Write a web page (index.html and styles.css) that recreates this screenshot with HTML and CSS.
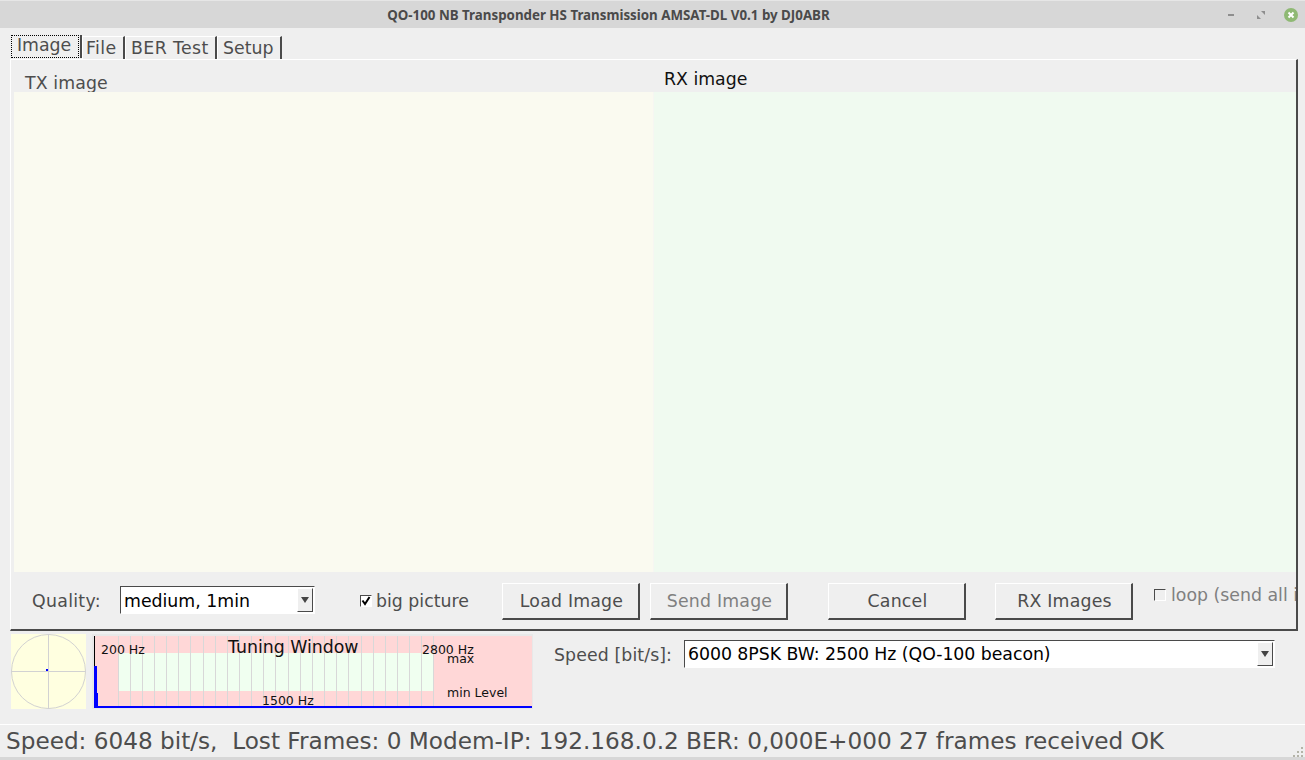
FILE: index.html
```html
<!DOCTYPE html>
<html lang="en">
<head>
<meta charset="utf-8">
<title>QO-100 NB Transponder HS Transmission</title>
<link rel="stylesheet" href="styles.css">
</head>
<body>
<div class="window">
  <header class="titlebar">
    <div class="title">QO-100 NB Transponder HS Transmission AMSAT-DL V0.1 by DJ0ABR</div>
    <div class="wm-buttons">
      <svg class="wm-icon" viewBox="0 0 14 14"><rect x="4" y="6" width="6" height="2" fill="#8e8e8e"/></svg>
      <svg class="wm-icon" viewBox="0 0 14 14"><path d="M7 3h4v4zM3 7v4h4z" fill="#8e8e8e"/></svg>
      <svg class="wm-close" viewBox="0 0 14 14"><circle cx="7" cy="7" r="7" fill="#8fb974"/><path d="M4.5 4.5l5 5M9.5 4.5l-5 5" stroke="#fff" stroke-width="2"/></svg>
    </div>
  </header>

  <nav class="tabs">
    <div class="tab tab-active"><span class="tab-focus">Image</span></div>
    <div class="tab tab-file">File</div>
    <div class="tab tab-ber">BER Test</div>
    <div class="tab tab-setup">Setup</div>
  </nav>

  <main class="panel">
    <div class="viewers">
      <section class="viewer">
        <div class="viewer-label tx-label">TX image</div>
        <div class="viewer-area tx-area"></div>
      </section>
      <section class="viewer">
        <div class="viewer-label rx-label">RX image</div>
        <div class="viewer-area rx-area"></div>
      </section>
    </div>
    <div class="controls">
      <span class="label quality-label">Quality:</span>
      <div class="combo quality-combo">
        <span class="combo-text">medium, 1min</span>
        <span class="combo-arrow"><svg viewBox="0 0 8 6" class="arrow"><path d="M0 0h8L4 6z" fill="#444"/></svg></span>
      </div>
      <label class="check big-check">
        <span class="checkbox"><svg viewBox="0 0 10 10"><path d="M1.5 4.5L4 8l4.5-7" fill="none" stroke="#000" stroke-width="2"/></svg></span>
        <span class="label">big picture</span>
      </label>
      <button class="btn load-btn">Load Image</button>
      <button class="btn send-btn" disabled>Send Image</button>
      <button class="btn cancel-btn">Cancel</button>
      <button class="btn rx-btn">RX Images</button>
      <label class="check loop-check">
        <span class="checkbox checkbox-off"></span>
        <span class="label-disabled">loop (send all images)</span>
      </label>
    </div>
  </main>

  <section class="lower">
    <svg class="scope" viewBox="0 0 75 75" width="75" height="75">
      <rect width="75" height="75" fill="#ffffe0"/>
      <circle cx="37.5" cy="37.5" r="37" fill="none" stroke="#d2d2d2"/>
      <path d="M37.5 0v75M0 37.5h75" stroke="#d2d2d2"/>
      <rect x="35" y="35" width="2" height="2" fill="#0000ff"/>
    </svg>
    <svg class="tuning" viewBox="0 0 441 75" width="441" height="75">
      <rect width="441" height="75" fill="#e8e8e8"/>
      <rect x="2" y="2" width="438" height="70" fill="#ffd7d7"/>
      <rect x="26" y="19" width="315" height="38" fill="#f0fff0"/>
      <path class="grid-lines" d="M26.5 2v70M38.5 2v70M50.5 2v70M62.5 2v70M74.5 2v70M86.5 2v70M98.5 2v70M111.5 2v70M123.5 2v70M135.5 2v70M147.5 2v70M159.5 2v70M171.5 2v70M183.5 2v70M196.5 2v70M208.5 2v70M220.5 2v70M232.5 2v70M244.5 2v70M256.5 2v70M269.5 2v70M281.5 2v70M293.5 2v70M305.5 2v70M317.5 2v70M329.5 2v70M341.5 2v70"/>
      <rect x="2" y="2" width="1" height="30" fill="#000"/>
      <rect x="2" y="32" width="3" height="27" fill="#0000ff"/>
      <rect x="2" y="59" width="4" height="13" fill="#0000ff"/>
      <rect x="2" y="72" width="438" height="2" fill="#0000ff"/>
      <text x="9" y="20" class="t-small">200 Hz</text>
      <text x="136" y="19" class="t-title">Tuning Window</text>
      <text x="330" y="20" class="t-small">2800 Hz</text>
      <text x="355" y="29" class="t-small">max</text>
      <text x="355" y="63" class="t-small">min Level</text>
      <text x="170" y="71" class="t-small">1500 Hz</text>
    </svg>
    <span class="label speed-label">Speed [bit/s]:</span>
    <div class="combo speed-combo">
      <span class="combo-text">6000 8PSK BW: 2500 Hz (QO-100 beacon)</span>
      <span class="combo-arrow"><svg viewBox="0 0 8 6" class="arrow"><path d="M0 0h8L4 6z" fill="#444"/></svg></span>
    </div>
  </section>

  <footer class="statusbar">
    <span class="status-text">Speed: 6048 bit/s,&nbsp; Lost Frames: 0 Modem-IP: 192.168.0.2 BER: 0,000E+000 27 frames received OK</span>
    <svg class="grip" viewBox="0 0 10 10" width="10" height="10"><path d="M8 0h2v2H8zM4 4h2v2H4zM8 4h2v2H8zM0 8h2v2H0zM4 8h2v2H4zM8 8h2v2H8z" fill="#b4b4a8"/></svg>
  </footer>
  <div class="bottom-edge"></div>
</div>
</body>
</html>
```

FILE: styles.css
```css
* { box-sizing: border-box; }
html, body { margin: 0; padding: 0; }
body {
  width: 1305px;
  height: 760px;
  overflow: hidden;
  background: #efefef;
  font-family: "DejaVu Sans", sans-serif;
  font-size: 17.33px;
  color: #4d4d4d;
}
.window { width: 1305px; height: 760px; display: flex; flex-direction: column; }

.titlebar {
  height: 28px;
  flex: none;
  background: #d7d7d7;
  border-top: 1px solid #e6e6e6;
  display: flex;
  align-items: center;
  padding-right: 7px;
}
.title {
  flex: 1;
  text-align: center;
  font-family: "Noto Sans", sans-serif;
  font-weight: 700;
  font-size: 13.33px;
  color: #4a4a4a;
  padding-left: 7px;
  white-space: nowrap;
}
.wm-buttons { display: flex; align-items: center; gap: 16px; width: 88px; justify-content: flex-end; }
.wm-icon { width: 14px; height: 14px; }
.wm-close { width: 14px; height: 14px; }

.tabs { height: 31px; flex: none; display: flex; align-items: flex-end; padding-left: 11px; }
.tab {
  height: 23px;
  line-height: 23px;
  flex: none;
  border-right: 2px solid #4a4a4a;
  border-left: 1px solid #fff;
  border-top: 1px solid #fff;
  white-space: nowrap;
}
.tab-active {
  width: 71px;
  height: 23px;
  padding: 0 1px 0 0;
  border-top: 0;
  border-left: 0;
  margin-bottom: 1px;
}
.tab-focus {
  display: block;
  padding: 0 0 0 6px;
  height: 23px;
  line-height: 21px;
  outline: 1px dotted #000;
  outline-offset: -1px;
}
.tab-file { width: 43px; padding-left: 3px; letter-spacing: 0.4px; }
.tab-ber { width: 92px; padding-left: 5px; letter-spacing: 0.4px; }
.tab-setup { width: 65px; padding-left: 5px; }

.panel {
  height: 572px;
  flex: none;
  margin: 0 7px 0 10px;
  border-top: 1px solid #fff;
  border-left: 1px solid #fff;
  border-right: 2px solid #4a4a4a;
  border-bottom: 2px solid #4a4a4a;
  display: flex;
  flex-direction: column;
  overflow: hidden;
}
.viewers { height: 512px; flex: none; display: grid; grid-template-columns: 640px 642px; padding-left: 3px; gap: 0; }
.viewer { display: flex; flex-direction: column; min-width: 0; }
.viewer-label { height: 32px; flex: none; white-space: nowrap; }
.tx-label { padding: 13px 0 0 11px; line-height: 20px; letter-spacing: 0.1px; }
.rx-label { padding: 9px 0 0 10px; line-height: 20px; color: #111; }
.viewer-area { height: 480px; }
.tx-area { background: #fafaf0; border-right: 1px solid #f6f6f2; }
.rx-area { background: #f0faf0; }

.controls { flex: 1; display: flex; align-items: flex-start; min-width: 0; white-space: nowrap; overflow: hidden; }
.label { color: #4d4d4d; }
.quality-label { margin: 19px 0 0 21px; line-height: 20px; width: 88px; flex: none; letter-spacing: 0.3px; }
.combo {
  display: flex;
  background: #fff;
  border: 1px solid;
  border-color: #4a4a4a #fff #fff #4a4a4a;
  color: #000;
  flex: none;
}
.quality-combo { width: 195px; height: 28px; margin-top: 14px; }
.combo-text { flex: 1; padding: 1px 0 0 3px; line-height: 27px; white-space: nowrap; overflow: hidden; }
.combo-arrow {
  width: 16px;
  margin: 1px 1px 1px 0;
  background: #efefef;
  border: 1px solid;
  border-color: #fff #4a4a4a #4a4a4a #fff;
  display: flex;
  align-items: center;
  justify-content: center;
  flex: none;
}
.arrow { width: 8px; height: 6px; }
.check { display: flex; align-items: center; flex: none; }
.big-check { margin: 19px 0 0 45px; width: 142px; height: 20px; }
.checkbox {
  width: 12px;
  height: 12px;
  margin-right: 4px;
  border: 1px solid;
  border-color: #4a4a4a #fff #fff #4a4a4a;
  background: #fff;
  display: block;
  flex: none;
}
.checkbox svg { display: block; width: 10px; height: 10px; }
.checkbox-off { background: #efefef; margin-right: 5px; }
.btn {
  width: 138px;
  height: 37px;
  margin-top: 11px;
  flex: none;
  font: inherit;
  letter-spacing: 0.2px;
  color: #4d4d4d;
  background: #efefef;
  border: 1px solid;
  border-color: #fff #4a4a4a #4a4a4a #fff;
  border-width: 1px 2px 2px 1px;
  padding: 0 0 0 2px;
}
.btn:disabled { color: #808080; }
.send-btn { margin-left: 10px; }
.cancel-btn { margin-left: 40px; }
.rx-btn { margin-left: 29px; }
.loop-check { margin: 13px 0 0 21px; height: 20px; }
.label-disabled { color: #808080; }

.lower { height: 93px; flex: none; display: flex; align-items: flex-start; padding-left: 11px; }
.scope { margin-top: 3px; flex: none; }
.tuning { margin: 3px 0 0 6px; flex: none; }
.grid-lines { stroke: #d8d8d8; stroke-width: 1; fill: none; }
.t-small { font-family: "DejaVu Sans", sans-serif; font-size: 12.5px; fill: #111; }
.t-title { font-family: "DejaVu Sans", sans-serif; font-size: 17.33px; fill: #111; }
.speed-label { margin: 14px 0 0 21px; line-height: 20px; width: 130px; flex: none; letter-spacing: 0.1px; }
.speed-combo { width: 591px; height: 28px; margin-top: 9px; }
.speed-combo .combo-text { letter-spacing: -0.05px; padding-top: 0; }

.statusbar {
  height: 33px;
  flex: none;
  border-top: 1px solid #fff;
  display: flex;
  align-items: center;
  padding: 0 0 0 6px;
  position: relative;
}
.status-text { font-size: 23.16px; color: #4d4d4d; white-space: nowrap; }
.grip { position: absolute; right: 2px; bottom: 0; }
.bottom-edge { height: 3px; flex: none; background: #d7d7d7; }
```
